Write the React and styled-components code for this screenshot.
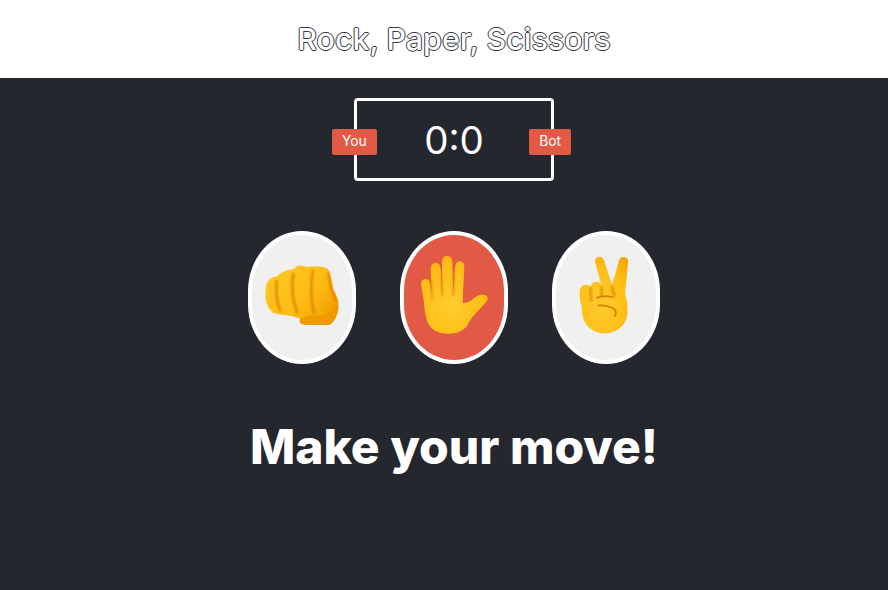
import React from "react";
import styled, { createGlobalStyle } from "styled-components";

const GlobalStyle = createGlobalStyle`
  html, body {
    margin: 0;
    padding: 0;
    overflow: hidden;
    background: #24272e;
    font-family: Inter, "Liberation Sans", sans-serif;
  }
`;

// the content sits 10px right of the window's centre, as in the reference
const Page = styled.div`
  width: 908px;
  height: 590px;
  background: #24272e;
`;

const Header = styled.header`
  height: 78px;
  background: #fff;
  display: flex;
  align-items: center;
  justify-content: center;
`;

const Title = styled.h1`
  margin: 0;
  font-size: 30.4px;
  font-weight: 500;
  color: #fff;
  text-shadow: -1px 0 0 #33363c, 1px 0 0 #33363c, 0 -1px 0 #33363c, 0 1px 0 #33363c;
`;

const Board = styled.div`
  box-sizing: border-box;
  position: relative;
  width: 200px;
  height: 83px;
  margin: 20px auto 0;
  border: 3px solid #fff;
  border-radius: 4px;
  display: flex;
  align-items: center;
  justify-content: center;
  color: #fff;
  font-size: 38.5px;
  font-weight: 400;
`;

const Badge = styled.div`
  position: absolute;
  top: 28px;
  ${(p) => (p.$side === "left" ? "left: -25px;" : "right: -20px;")}
  box-sizing: border-box;
  height: 26px;
  padding: 0 10px 2px;
  display: flex;
  align-items: center;
  background: #e25a45;
  border-radius: 2px;
  font-size: 13.8px;
  font-weight: 400;
`;

const Choices = styled.div`
  display: flex;
  justify-content: center;
  gap: 44px;
  margin-top: 50px;
`;

const Choice = styled.button`
  box-sizing: border-box;
  width: 108px;
  height: 133px;
  padding: 0 0 5px;
  border: 4px solid #fff;
  border-radius: 50% / 45%;
  background: ${(p) => (p.$selected ? "#e25a45" : "#f0f0f0")};
  display: flex;
  align-items: center;
  justify-content: center;
`;

const Message = styled.h2`
  margin: 53px 0 0;
  text-align: center;
  color: #fff;
  font-size: 48px;
  font-weight: 800;
`;

const Emoji = ({ children }) => (
  <svg width="80" height="80" viewBox="66 88 240 240">
    <defs>
      <linearGradient id="fist" x1="0" y1="0" x2="1" y2="0.7">
        <stop offset="0" stopColor="#ffc824" />
        <stop offset="0.6" stopColor="#ffbe14" />
        <stop offset="1" stopColor="#f4a000" />
      </linearGradient>
      <radialGradient id="palm" cx="0.45" cy="0.62" r="0.75">
        <stop offset="0" stopColor="#ffcd2e" />
        <stop offset="0.65" stopColor="#ffbe16" />
        <stop offset="1" stopColor="#f7a600" />
      </radialGradient>
      <filter id="soft" x="-10%" y="-10%" width="120%" height="120%">
        <feGaussianBlur stdDeviation="1.4" />
      </filter>
      <filter id="shade" x="-30%" y="-30%" width="160%" height="160%">
        <feGaussianBlur stdDeviation="3" />
      </filter>
    </defs>
    {children}
  </svg>
);

const Rock = () => (
  <Emoji>
    <path
      filter="url(#soft)"
      d="M78 180 Q84 155 112 152 Q125 135 160 130 Q175 112 200 124 Q235 118 262 128 Q275 150 278 190 Q297 215 296 245 Q292 285 268 298 L195 297 Q175 295 180 278 L150 270 Q125 268 100 262 Q80 250 76 215 Z"
      fill="url(#fist)"
    />
    <path
      filter="url(#shade)"
      d="M110 165 Q104 210 120 254 M160 145 Q150 205 172 262 M218 135 Q208 205 222 262 M265 140 Q272 190 286 225"
      fill="none"
      stroke="#e08400"
      strokeWidth="7"
      strokeLinecap="round"
    />
    <path
      filter="url(#soft)"
      d="M180 282 Q200 264 226 270 Q262 276 290 232 Q300 272 268 298 L195 297 Q175 295 180 282 Z"
      fill="#f09a00"
    />
  </Emoji>
);

const Paper = () => (
  <Emoji>
    <path
      filter="url(#soft)"
      d="M87 175 Q88 160 101 160 Q112 160 115 175 L119 205 L116 130 Q117 111 131 111 Q144 111 146 130 L150 200 L150 108 Q151 91 165 91 Q180 91 181 108 L184 200 L189 125 Q191 107 204 107 Q218 109 217 125 L213 200 L212 232 Q232 232 250 214 Q265 203 280 208 Q292 214 285 226 Q268 246 248 266 Q232 285 226 300 Q205 326 165 324 Q125 323 109 295 Q97 265 96 230 Z"
      fill="url(#palm)"
    />
    <path
      filter="url(#shade)"
      d="M117 160 L120 218 M148 150 L151 210 M186 150 L184 210"
      fill="none"
      stroke="#d97f00"
      strokeWidth="4"
      strokeLinecap="round"
    />
  </Emoji>
);

const Scissors = () => (
  <Emoji>
    <path
      filter="url(#soft)"
      d="M153 108 Q153 94 166 93 Q177 93 181 106 L204 178 L225 105 Q229 92 241 94 Q254 97 252 112 L243 205 Q253 235 250 265 Q245 305 205 320 Q170 330 140 310 Q112 290 113 240 Q106 225 107 195 Q110 177 125 177 Q135 177 140 183 Q143 168 158 168 Q168 168 172 178 Z"
      fill="url(#palm)"
    />
    <path
      filter="url(#shade)"
      d="M140 186 Q138 205 142 226 M172 184 Q176 198 172 210 M204 182 Q206 198 212 212"
      fill="none"
      stroke="#d98400"
      strokeWidth="6"
      strokeLinecap="round"
    />
    <path
      filter="url(#soft)"
      d="M160 214 Q190 206 214 222 Q226 236 214 250 Q190 240 168 238 Q150 228 160 214 Z"
      fill="#ffc726"
    />
    <path
      filter="url(#soft)"
      d="M163 239 Q195 238 213 252 Q219 262 212 272 M158 216 Q182 207 206 215"
      fill="none"
      stroke="#d98000"
      strokeWidth="5"
      strokeLinecap="round"
    />
  </Emoji>
);

export default function App() {
  return (
    <Page>
      <GlobalStyle />
      <Header>
        <Title>Rock, Paper, Scissors</Title>
      </Header>
      <Board>
        <Badge $side="left">You</Badge>
        0:0
        <Badge $side="right">Bot</Badge>
      </Board>
      <Choices>
        <Choice>
          <Rock />
        </Choice>
        <Choice $selected>
          <Paper />
        </Choice>
        <Choice>
          <Scissors />
        </Choice>
      </Choices>
      <Message>Make your move!</Message>
    </Page>
  );
}
